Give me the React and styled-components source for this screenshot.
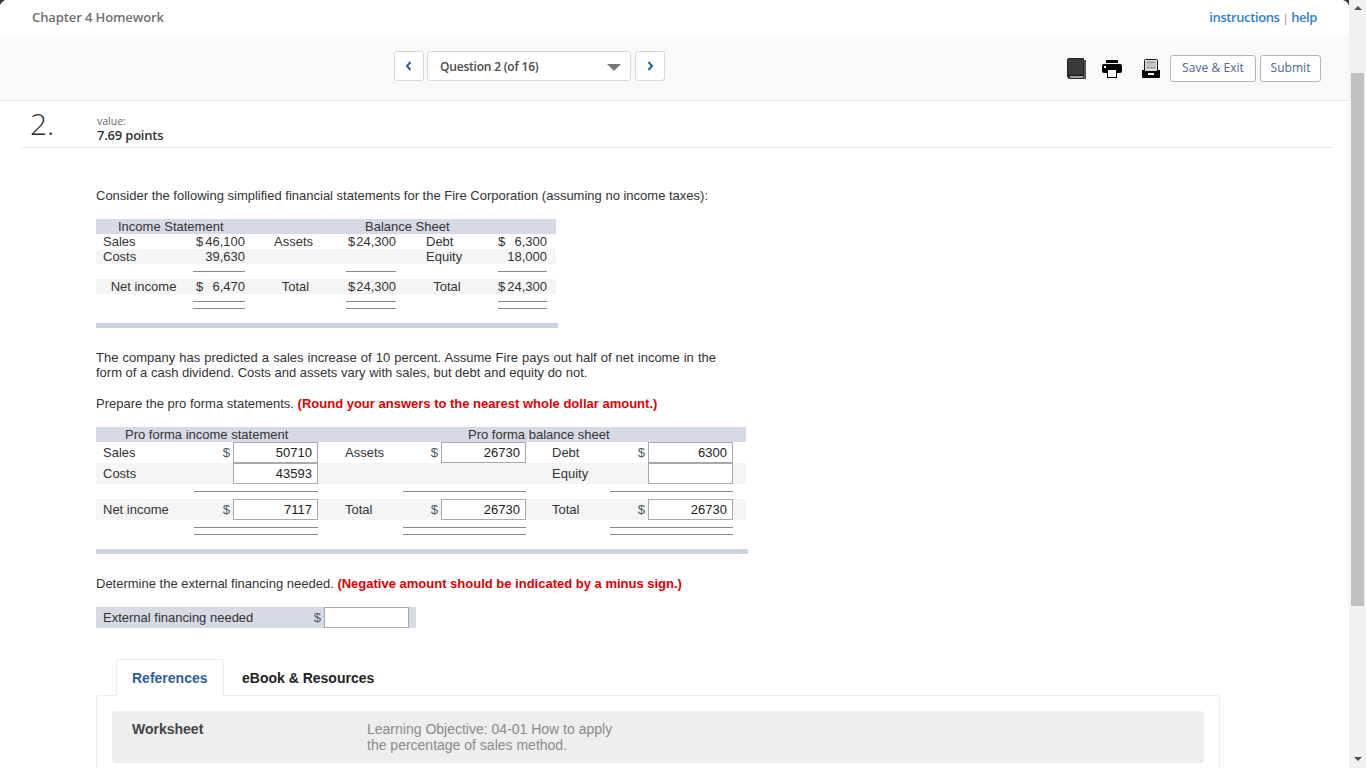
import React from "react";
import styled, { createGlobalStyle } from "styled-components";

const Global = createGlobalStyle`
  html, body { margin: 0; padding: 0; height: 768px; overflow: hidden; background: #fff; }
  body { font-family: "Liberation Sans", Arial, sans-serif; font-size: 13px; color: #333; }
  * { box-sizing: border-box; }
`;

const Shell = styled.div`
  display: flex;
  width: 1366px;
  height: 768px;
  overflow: hidden;
`;
const Main = styled.main`
  width: 1349px;
  flex: none;
`;
const Scrollbar = styled.div`
  width: 17px;
  background: #f1f1f1;
  display: flex;
  flex-direction: column;
  align-items: center;
  justify-content: space-between;
  padding: 6px 0 7px;
`;
const Thumb = styled.div`
  position: absolute;
  top: 73px;
  left: 1351px;
  width: 13px;
  height: 533px;
  background: #c1c1c1;
`;
const Arrow = styled.div`
  width: 0;
  height: 0;
  border-left: 4px solid transparent;
  border-right: 4px solid transparent;
  ${(p) => (p.$up ? "border-bottom: 4px solid #505050;" : "border-top: 4px solid #505050;")}
`;
const Corner = styled.svg`
  position: absolute;
  top: 0;
  left: ${(p) => p.$left}px;
`;

const TopBar = styled.header`
  height: 35px;
  display: flex;
  align-items: center;
  justify-content: space-between;
  padding: 0 32px 2px;
  font-family: "Open Sans", sans-serif;
  font-size: 13px;
  font-weight: 600;
  letter-spacing: -0.1px;
  color: #6f6f6f;
`;
const Links = styled.div`
  color: #2f7fd1;
  font-size: 13px;
  letter-spacing: -0.4px;
  a { color: inherit; text-decoration: none; }
  span { color: #888; font-weight: 400; margin: 0 3px; font-size: 11px; }
`;

const Toolbar = styled.div`
  height: 66px;
  background: #f9f9f9;
  border-bottom: 1px solid #e8e8e8;
  display: grid;
  grid-template-columns: 394px 271px 1fr;
  padding-right: 28px;
  align-items: flex-start;
`;
const Nav = styled.div`
  grid-column: 2;
  display: flex;
  gap: 3px;
  margin-top: 16px;
`;
const NavButton = styled.button`
  width: 30px;
  height: 30px;
  padding: 0;
  background: #fff;
  border: 1px solid #d8d8d8;
  border-radius: 3px;
  display: flex;
  align-items: center;
  justify-content: center;
`;
const QuestionSelect = styled.div`
  width: 204px;
  height: 30px;
  margin-right: 1px;
  background: #fff;
  border: 1px solid #d8d8d8;
  border-radius: 3px;
  display: flex;
  align-items: center;
  justify-content: space-between;
  padding: 0 9px 0 12px;
  font-family: "Open Sans", sans-serif;
  font-size: 12px;
  font-weight: 600;
  letter-spacing: -0.2px;
  color: #4a4a4a;
`;
const Caret = styled.div`
  width: 0;
  height: 0;
  border-left: 7px solid transparent;
  border-right: 7px solid transparent;
  border-top: 7px solid #777;
  margin-top: 2px;
`;
const Tools = styled.div`
  display: flex;
  justify-content: flex-end;
  align-items: center;
  margin-top: 20px;
`;
const ToolIcon = styled.svg`
  display: block;
  flex: none;
  margin-right: ${(p) => p.$gap}px;
`;
const ActionButton = styled.button`
  height: 27px;
  width: ${(p) => p.$w}px;
  margin-left: ${(p) => p.$gap}px;
  padding: 0 0 2px;
  background: #fff;
  border: 1px solid #b5b5b5;
  border-radius: 3px;
  font-family: "Open Sans", sans-serif;
  font-size: 12px;
  letter-spacing: 0.05px;
  color: #50658f;
`;

const QuestionHead = styled.div`
  height: 47px;
  margin: 0 16px 0 22px;
  border-bottom: 1px solid #e8e8e8;
  display: flex;
  position: relative;
`;
const QuestionNumber = styled.div`
  width: 75px;
  padding: 4px 0 0 8px;
  font-family: "Open Sans", sans-serif;
  font-size: 30px;
  font-weight: 300;
  line-height: 38px;
  color: #2b2b2b;
`;
const Value = styled.div`
  padding-top: 14px;
  font-family: "Open Sans", sans-serif;
  small { display: block; font-size: 10.5px; line-height: 12px; color: #666; font-weight: 400; }
  strong { display: block; font-size: 13px; line-height: 17px; font-weight: 600; letter-spacing: -0.2px; color: #333; }
`;

const Content = styled.div`
  padding-left: 96px;
`;
const Para = styled.p`
  margin: ${(p) => p.$top}px 0 0;
  width: ${(p) => p.$w || 660}px;
  line-height: 15px;
  font-size: 13px;
  color: #333;
  text-align: ${(p) => (p.$justify ? "justify" : "left")};
  height: ${(p) => (p.$lines || 1) * 15}px;
  b { color: #e00000; }
`;

const Sheet = styled.div`
  width: ${(p) => p.$w}px;
  margin-top: 16px;
`;
const Row = styled.div`
  display: grid;
  grid-template-columns: ${(p) => p.$cols};
  height: ${(p) => p.$h}px;
  line-height: ${(p) => p.$h}px;
  background: ${(p) => (p.$band ? "#f5f5f5" : "transparent")};
`;
const HeadRow = styled.div`
  height: 15px;
  line-height: 15px;
  background: #d6dae5;
  display: flex;
`;
const HeadCell = styled.div`
  width: ${(p) => p.$w}px;
  padding-left: ${(p) => p.$pad}px;
  white-space: nowrap;
`;
const Label = styled.div`
  padding-left: ${(p) => p.$pad || 0}px;
  padding-right: ${(p) => (p.$center ? p.$nudge || 0 : 0)}px;
  text-align: ${(p) => (p.$center ? "center" : "left")};
  white-space: nowrap;
`;
const Amount = styled.div`
  display: flex;
  justify-content: space-between;
  padding-left: ${(p) => p.$inset || 0}px;
`;
const Rule = styled.div`
  height: ${(p) => (p.$double ? 8 : 1)}px;
  margin-top: 7px;
  border-top: 1px solid #888;
  ${(p) => p.$double && "border-bottom: 1px solid #888;"}
`;
const EndBar = styled.div`
  width: ${(p) => p.$w}px;
  height: 5px;
  margin-top: 14px;
  background: #cdd3e0;
`;
const Entry = styled.div`
  display: flex;
  justify-content: flex-end;
  align-items: center;
  gap: 3px;
  color: #4f5a60;
  font-size: 13px;
`;
const Field = styled.div`
  width: 85px;
  height: 21px;
  line-height: 19px;
  padding-right: 5px;
  background: #fff;
  border: 1px solid #a9a9a9;
  text-align: right;
  color: #222;
  font-size: 13px;
`;
const ExternalRow = styled.div`
  width: 320px;
  height: 21px;
  margin-top: 16px;
  padding: 0 7px;
  background: #d6dae5;
  display: flex;
  align-items: center;
  justify-content: space-between;
  line-height: 21px;
`;

const TabStrip = styled.div`
  display: flex;
  margin: 31px 0 0 20px;
  height: 37px;
`;
const Tab = styled.div`
  width: ${(p) => p.$w}px;
  height: ${(p) => (p.$active ? 37 : 36)}px;
  line-height: 38px;
  padding-left: ${(p) => p.$pad}px;
  font-size: 14px;
  font-weight: 700;
  color: ${(p) => (p.$active ? "#2d5f9b" : "#222")};
  background: #fff;
  position: relative;
  z-index: 1;
  ${(p) => p.$active && "border: 1px solid #ececec; border-bottom: 0; border-radius: 3px 3px 0 0; line-height: 36px;"}
`;
const Panel = styled.div`
  width: 1124px;
  height: 90px;
  margin-top: -1px;
  padding: 15px;
  border: 1px solid #ececec;
  border-radius: 3px;
`;
const Resource = styled.div`
  height: 52px;
  background: #eee;
  border-radius: 4px;
  display: grid;
  grid-template-columns: 235px 1fr;
  padding: 10px 20px;
`;
const ResourceTitle = styled.div`
  font-size: 14px;
  font-weight: 700;
  color: #444;
  line-height: 16px;
`;
const ResourceText = styled.div`
  font-size: 14px;
  color: #8a8a8a;
  line-height: 16px;
`;

const Chevron = ({ left }) => (
  <svg width="8" height="12" viewBox="0 0 8 12">
    <path d={left ? "M5.5 2 L2 6 L5.5 10" : "M2.5 2 L6 6 L2.5 10"} fill="none" stroke="#2d5f9b" strokeWidth="2" />
  </svg>
);

const Book = () => (
  <ToolIcon $gap={16} width="19" height="22" viewBox="0 0 19 22">
    <path d="M.5 2 Q.5 .5 2 .5 H16.5 V17 H3 Q.5 17 .5 19 Z" fill="#3a3a3a" stroke="#222" />
    <rect x="17" y="2" width="2" height="19" fill="#555" />
    <path d="M.5 19 Q.5 17 3 17 H17 V21 H3 Q.5 21 .5 19Z" fill="#222" />
    <rect x="3" y="18.3" width="13.5" height="1.5" fill="#ccc" />
  </ToolIcon>
);
const Printer = () => (
  <ToolIcon $gap={20} width="20" height="18" viewBox="0 0 20 18">
    <rect x="4" y="0" width="12" height="3" fill="#000" />
    <rect x="0" y="4" width="20" height="9" rx="2" fill="#000" />
    <rect x="2" y="6" width="2" height="2" fill="#fff" />
    <rect x="5" y="9" width="10" height="9" fill="#000" />
    <rect x="6" y="10" width="8" height="7" fill="#fff" />
  </ToolIcon>
);
const Drawer = () => (
  <ToolIcon $gap={0} width="18" height="20" viewBox="0 0 18 20">
    <path d="M2.5 12 V1.5 Q2.5 .5 3.5 .5 H14.5 Q15.5 .5 15.5 1.5 V12" fill="#ddd" stroke="#111" />
    <rect x="4.5" y="2.5" width="9" height="7" fill="#999" />
    <path d="M4.5 5H13.5M4.5 7H13.5" stroke="#fff" strokeWidth=".9" />
    <path d="M0 11 H3 V12 H15 V11 H18 V18 Q18 19 17 19 H1 Q0 19 0 18Z" fill="#000" />
    <rect x="6" y="14" width="6" height="2" fill="#fff" />
  </ToolIcon>
);

const COLS_A = "97px 52px 101px 50px 102px 49px 9px";
const COLS_B = "98px 124px 85px 123px 84px 123px 13px";

const Money = ({ big, value, inset }) => (
  <Amount $inset={inset}>
    <span>{big}</span>
    <span>{value}</span>
  </Amount>
);
const Entered = ({ sign, value }) => (
  <Entry>
    {sign && <span>$</span>}
    <Field>{value}</Field>
  </Entry>
);

function RuleRow({ cols, double }) {
  return (
    <Row $cols={cols} $h={15}>
      <div />
      <Rule $double={double} />
      <div />
      <Rule $double={double} />
      <div />
      <Rule $double={double} />
    </Row>
  );
}

function FinancialStatements() {
  return (
    <Sheet $w={460}>
      <HeadRow>
        <HeadCell $w={269} $pad={22}>Income Statement</HeadCell>
        <HeadCell $w={191} $pad={0}>Balance Sheet</HeadCell>
      </HeadRow>
      <Row $cols={COLS_A} $h={15}>
        <Label $pad={7}>Sales</Label>
        <Money big="$" value="46,100" inset={3} />
        <Label $pad={29}>Assets</Label>
        <Money big="$" value="24,300" inset={2} />
        <Label $pad={30}>Debt</Label>
        <Money big="$" value="6,300" />
      </Row>
      <Row $cols={COLS_A} $h={15} $band>
        <Label $pad={7}>Costs</Label>
        <Money big="" value="39,630" />
        <div />
        <div />
        <Label $pad={30}>Equity</Label>
        <Money big="" value="18,000" />
      </Row>
      <RuleRow cols={COLS_A} />
      <Row $cols={COLS_A} $h={15} $band>
        <Label $center $nudge={2}>Net income</Label>
        <Money big="$" value="6,470" inset={3} />
        <Label $center>Total</Label>
        <Money big="$" value="24,300" inset={2} />
        <Label $center>Total</Label>
        <Money big="$" value="24,300" />
      </Row>
      <RuleRow cols={COLS_A} double />
      <EndBar $w={462} />
    </Sheet>
  );
}

function ProForma() {
  return (
    <Sheet $w={650}>
      <HeadRow>
        <HeadCell $w={372} $pad={29}>Pro forma income statement</HeadCell>
        <HeadCell $w={278} $pad={0}>Pro forma balance sheet</HeadCell>
      </HeadRow>
      <Row $cols={COLS_B} $h={21}>
        <Label $pad={7}>Sales</Label>
        <Entered sign value="50710" />
        <Label $pad={27}>Assets</Label>
        <Entered sign value="26730" />
        <Label $pad={26}>Debt</Label>
        <Entered sign value="6300" />
      </Row>
      <Row $cols={COLS_B} $h={21} $band>
        <Label $pad={7}>Costs</Label>
        <Entered value="43593" />
        <div />
        <div />
        <Label $pad={26}>Equity</Label>
        <Entered value="" />
      </Row>
      <RuleRow cols={COLS_B} />
      <Row $cols={COLS_B} $h={21} $band>
        <Label $pad={7}>Net income</Label>
        <Entered sign value="7117" />
        <Label $pad={27}>Total</Label>
        <Entered sign value="26730" />
        <Label $pad={26}>Total</Label>
        <Entered sign value="26730" />
      </Row>
      <RuleRow cols={COLS_B} double />
      <EndBar $w={652} />
    </Sheet>
  );
}

export default function App() {
  return (
    <Shell>
      <Global />
      <Main>
        <TopBar>
          <span>Chapter 4 Homework</span>
          <Links>
            <a>instructions</a>
            <span>|</span>
            <a>help</a>
          </Links>
        </TopBar>
        <Toolbar>
          <Nav>
            <NavButton><Chevron left /></NavButton>
            <QuestionSelect>
              Question 2 (of 16)
              <Caret />
            </QuestionSelect>
            <NavButton><Chevron /></NavButton>
          </Nav>
          <Tools>
            <Book />
            <Printer />
            <Drawer />
            <ActionButton $w={86} $gap={10}>Save &amp; Exit</ActionButton>
            <ActionButton $w={61} $gap={4}>Submit</ActionButton>
          </Tools>
        </Toolbar>
        <QuestionHead>
          <QuestionNumber>2.</QuestionNumber>
          <Value>
            <small>value:</small>
            <strong>7.69 points</strong>
          </Value>
        </QuestionHead>
        <Content>
          <Para $top={40} $w={760}>
            Consider the following simplified financial statements for the Fire Corporation (assuming no income taxes):
          </Para>
          <FinancialStatements />
          <Para $top={22} $w={620} $lines={2} $justify>
            The company has predicted a sales increase of 10 percent. Assume Fire pays out half of net income in the form of a cash dividend. Costs and assets vary with sales, but debt and equity do not.
          </Para>
          <Para $top={16} $w={760}>
            Prepare the pro forma statements. <b>(Round your answers to the nearest whole dollar amount.)</b>
          </Para>
          <ProForma />
          <Para $top={22} $w={760}>
            Determine the external financing needed. <b>(Negative amount should be indicated by a minus sign.)</b>
          </Para>
          <ExternalRow>
            <span>External financing needed</span>
            <Entered sign value="" />
          </ExternalRow>
          <TabStrip>
            <Tab $active $w={108} $pad={15}>References</Tab>
            <Tab $w={160} $pad={18}>eBook &amp; Resources</Tab>
          </TabStrip>
          <Panel>
            <Resource>
              <ResourceTitle>Worksheet</ResourceTitle>
              <ResourceText>
                Learning Objective: 04-01 How to apply
                <br />
                the percentage of sales method.
              </ResourceText>
            </Resource>
          </Panel>
        </Content>
      </Main>
      <Scrollbar>
        <Arrow $up />
        <Arrow />
      </Scrollbar>
      <Thumb />
      <Corner $left={0} width="6" height="6" viewBox="0 0 6 6">
        <path d="M0 0H5Q1.5 1.5 0 5Z" fill="#333" />
      </Corner>
      <Corner $left={1343} width="6" height="6" viewBox="0 0 6 6">
        <path d="M0 0H6V6Q5 1.5 0 0Z" fill="#333" />
      </Corner>
    </Shell>
  );
}
